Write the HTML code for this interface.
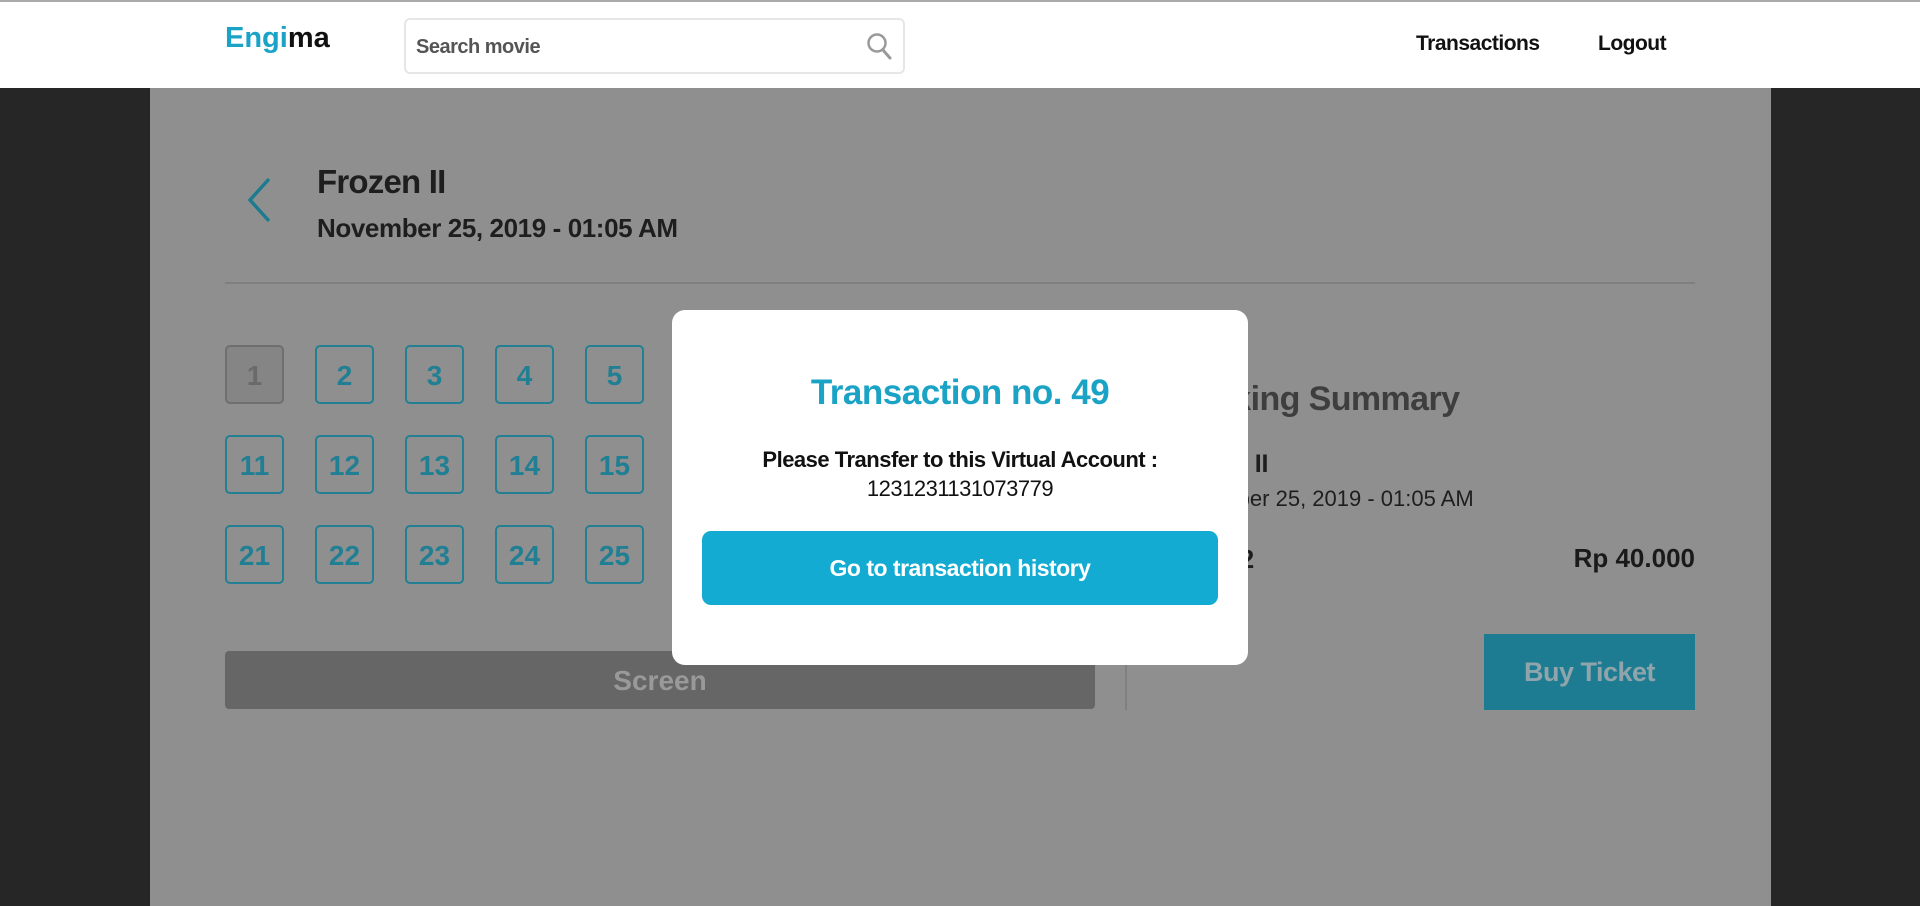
<!DOCTYPE html>
<html><head><meta charset="utf-8"><style>
*{margin:0;padding:0;box-sizing:border-box}
body{width:1920px;height:906px;overflow:hidden;background:#262626;font-family:"Liberation Sans",sans-serif;position:relative}
.hdr{position:absolute;left:0;top:0;width:1920px;height:88px;background:#fff;border-top:2px solid #aaa}
.logo{position:absolute;left:225px;top:20px;font-size:29px;font-weight:bold;color:#111}
.logo span{color:#1aa3c6}
.search{position:absolute;left:404px;top:16px;width:501px;height:56px;border:2px solid #e6e6e6;border-radius:6px}
.search div{position:absolute;left:10px;top:16px;font-size:20px;color:#555;font-weight:bold;letter-spacing:-0.5px}
.nav{position:absolute;top:30px;font-size:21px;color:#111;font-weight:bold;letter-spacing:-0.5px}
.main{position:absolute;left:150px;top:88px;width:1621px;height:818px;background:#8f8f8f}
.t{position:absolute;color:#1e1e1e;letter-spacing:-0.8px}
.seat{position:absolute;width:59px;height:59px;border:2px solid #237f93;border-radius:5px;color:#217f93;font-weight:bold;font-size:28px;text-align:center;line-height:57px}
.seat.x{background:#858585;border-color:#6f6f6f;color:#6a6a6a}
.modal{position:absolute;left:672px;top:310px;width:576px;height:355px;background:#fff;border-radius:13px;text-align:center}
</style></head><body>
<div class="hdr">
<div class="logo"><span>Engi</span>ma</div>
<div class="search"><div>Search movie</div>
<svg style="position:absolute;right:10px;top:11px" width="28" height="30" viewBox="0 0 28 30"><circle cx="12" cy="12" r="8.5" fill="none" stroke="#999" stroke-width="2.5"/><line x1="18" y1="19" x2="25" y2="27" stroke="#999" stroke-width="3" stroke-linecap="round"/></svg></div>
<div class="nav" style="left:1416px">Transactions</div>
<div class="nav" style="left:1598px">Logout</div>
</div>
<div class="main">
<svg style="position:absolute;left:93px;top:88px" width="32" height="48" viewBox="0 0 32 48"><polyline points="26,3 7,24 26,45" fill="none" stroke="#1d7b90" stroke-width="3.5"/></svg>
<div class="t" style="left:167px;top:75px;font-size:33px;font-weight:bold">Frozen II</div>
<div class="t" style="left:167px;top:125px;font-size:26px;font-weight:bold;letter-spacing:-0.4px">November 25, 2019 - 01:05 AM</div>
<div style="position:absolute;left:75px;top:194px;width:1470px;height:2px;background:#7f7f7f"></div>
<div class="t" style="left:1018px;top:292px;font-size:34px;font-weight:bold;color:#3e3e3e;letter-spacing:-0.6px">Booking Summary</div>
<div class="t" style="left:1018px;top:362px;font-size:25px;font-weight:bold;letter-spacing:-0.3px">Frozen II</div>
<div class="t" style="left:1018px;top:398px;font-size:22px;letter-spacing:0">November 25, 2019 - 01:05 AM</div>
<div class="t" style="left:1018px;top:456px;font-size:26px;font-weight:bold">Seat #2</div>
<div class="t" style="right:76px;top:455px;font-size:26px;font-weight:bold;color:#1a1a1a;letter-spacing:0">Rp 40.000</div>
<div style="position:absolute;left:1334px;top:546px;width:211px;height:76px;background:#1e7c92;color:#8fa4ab;font-size:27px;font-weight:bold;text-align:center;line-height:76px;letter-spacing:-0.5px">Buy Ticket</div>
<div style="position:absolute;left:975px;top:570px;width:2px;height:52px;background:#808080"></div>
<div style="position:absolute;left:75px;top:563px;width:870px;height:58px;background:#666;border-radius:4px;color:#999;font-size:28px;font-weight:bold;text-align:center;line-height:60px">Screen</div>
</div>
<div class="seat x" style="left:225px;top:345px">1</div>
<div class="seat" style="left:315px;top:345px">2</div><div class="seat" style="left:405px;top:345px">3</div><div class="seat" style="left:495px;top:345px">4</div><div class="seat" style="left:585px;top:345px">5</div>
<div class="seat" style="left:225px;top:435px">11</div><div class="seat" style="left:315px;top:435px">12</div><div class="seat" style="left:405px;top:435px">13</div><div class="seat" style="left:495px;top:435px">14</div><div class="seat" style="left:585px;top:435px">15</div>
<div class="seat" style="left:225px;top:525px">21</div><div class="seat" style="left:315px;top:525px">22</div><div class="seat" style="left:405px;top:525px">23</div><div class="seat" style="left:495px;top:525px">24</div><div class="seat" style="left:585px;top:525px">25</div>
<div class="modal">
<div style="position:absolute;left:0;right:0;top:63px;font-size:35px;font-weight:bold;color:#1ba3c6;letter-spacing:-0.5px">Transaction no. 49</div>
<div style="position:absolute;left:0;right:0;top:135px;font-size:22px;font-weight:bold;color:#111;line-height:29px;letter-spacing:-0.5px">Please Transfer to this Virtual Account :<br><span style="font-weight:normal">1231231131073779</span></div>
<div style="position:absolute;left:30px;top:221px;width:516px;height:74px;background:#13abd1;border-radius:9px;color:#fff;font-size:23px;font-weight:bold;line-height:74px;letter-spacing:-0.5px">Go to transaction history</div>
</div>
</body></html>
